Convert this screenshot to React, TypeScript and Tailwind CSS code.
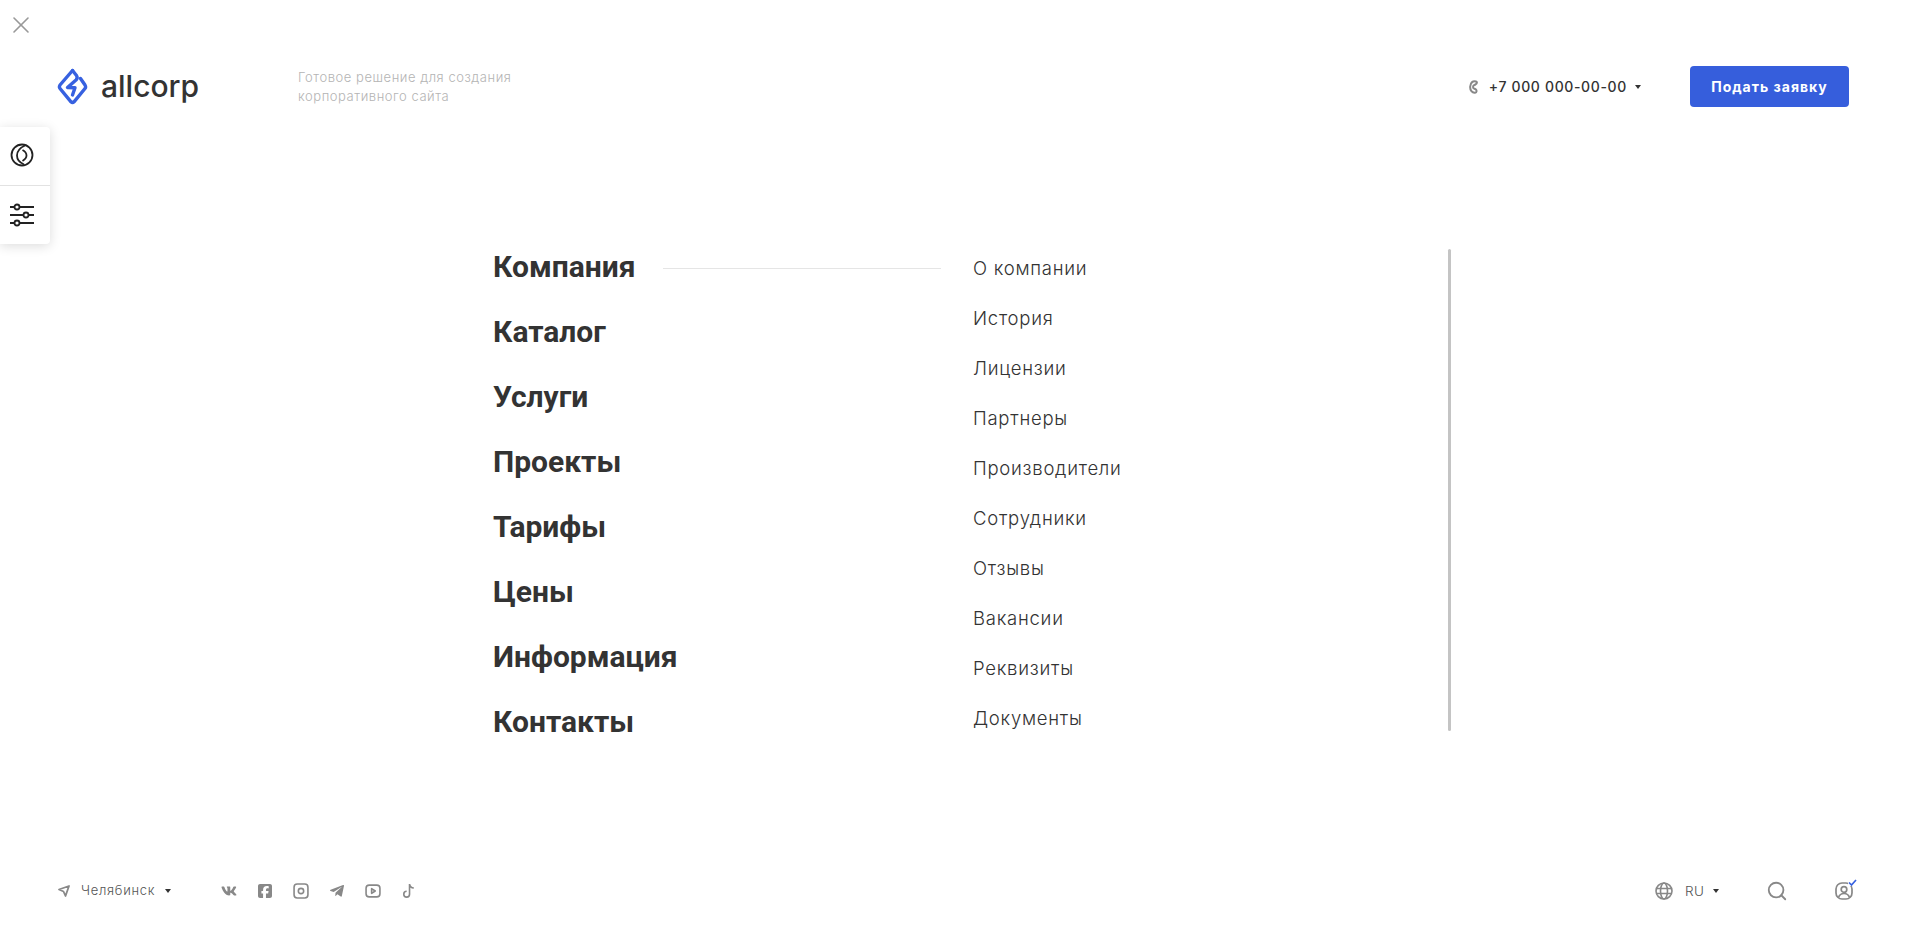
import { FaTelegramPlane, FaVk } from 'react-icons/fa';
import { FaSquareFacebook } from 'react-icons/fa6';
import { Search, X } from 'lucide-react';

const mainMenu = ['Компания', 'Каталог', 'Услуги', 'Проекты', 'Тарифы', 'Цены', 'Информация', 'Контакты'];
const subMenu = ['О компании', 'История', 'Лицензии', 'Партнеры', 'Производители', 'Сотрудники', 'Отзывы', 'Вакансии', 'Реквизиты', 'Документы'];

function Caret({ className = '' }: { className?: string }) {
	return (
		<svg width="6" height="4" viewBox="0 0 6 4" className={className}>
			<path d="M0 0h6L3 4z" fill="#333" />
		</svg>
	);
}

function Logo() {
	return (
		<svg width="32" height="38" viewBox="0 0 32 38" fill="none" stroke="#3761e0" strokeWidth="3.4" strokeLinejoin="round" strokeLinecap="round">
			<path d="M15.500 2.500 L3 17 Q1.800 19 3 20.500 L14 33.800 Q15.500 35.300 17 33.800 L28 20.500 Q29.200 19 28 17 L23.500 10.500" />
			<path d="M15.500 2.500 L19.500 7.500 Q21 10 19 12 L10.500 19.500 L18 19.800 L15.500 27" />
		</svg>
	);
}

export default function App() {
	return (
		<div className="relative flex flex-col h-[952px] bg-white overflow-hidden font-['Inter',sans-serif]">
			<button className="absolute left-[7px] top-[11px] text-[#999]">
				<X className="w-[28px] h-[28px]" strokeWidth={1.4} />
			</button>

			<div className="absolute left-0 top-[127px] w-[50px] h-[117px] flex flex-col bg-white rounded-r shadow-[0_2px_12px_rgba(0,0,0,0.14)]">
				<div className="h-[59px] flex items-center pl-[10px] pb-[3px] border-b border-[#e2e2e2]">
					<svg width="24" height="24" viewBox="0 0 24 24" fill="none" stroke="#222" strokeWidth="1.800">
						<circle cx="12" cy="12" r="10.500" />
						<path d="M15 2.500C9.500 5 7 9 7 12.500c0 4 2.500 7 7 9" />
						<path d="M12.500 7c2.800 1.500 4 3.500 4 5.500s-1.200 3.800-4 5.500" />
					</svg>
				</div>
				<div className="flex-1 flex items-center pl-[10px]">
					<svg width="24" height="24" viewBox="0 0 24 24" fill="none" stroke="#222" strokeWidth="1.800">
						<path d="M0 4h4.500M10 4h14M0 12h13M19 12h5M0 20h4.500M10 20h14" />
						<circle cx="7" cy="4" r="2.500" />
						<circle cx="16" cy="12" r="2.500" />
						<circle cx="7" cy="20" r="2.500" />
					</svg>
				</div>
			</div>

			<header className="flex items-center justify-between pt-[66px] pl-[57px] pr-[62px]">
				<div className="flex items-center">
					<Logo />
					<span className="ml-[12px] w-[109px] text-[30px] leading-[41px] font-medium tracking-[0px] text-[#333]">allcorp</span>
					<p className="ml-[88px] text-[13px] leading-[19px] font-light text-[#b4b4b4] tracking-[0.55px]">
						Готовое решение для создания
						<br />
						корпоративного сайта
					</p>
				</div>
				<div className="flex items-center">
					<svg width="9" height="14" viewBox="0 0 9 14" fill="none" stroke="#888" strokeWidth="2">
						<path d="M7 1.500C4 .5 1.500 2.500 1.200 6.500c-.3 4 2 6.500 4.800 6.200 2-.3 2-2.500.5-3.500C5.500 8.500 4 9 4 7s1.500-2 2.500-2.500C8 3.500 8.500 2 7 1.500z" />
					</svg>
					<span className="ml-[11px] text-[14px] font-medium text-[#333] tracking-[0.65px]">+7 000 000-00-00</span>
					<Caret className="ml-[8px]" />
					<button className="ml-[49px] w-[159px] h-[41px] rounded bg-[#365edc] text-white text-[14px] font-bold tracking-[1px]">Подать заявку</button>
				</div>
			</header>

			<main className="flex-1 flex pt-[127px] pl-[493px]">
				<nav className="w-[170px] flex flex-col">
					{mainMenu.map((item) => (
						<a key={item} className="h-[65px] flex items-center whitespace-nowrap font-['Roboto',sans-serif] font-bold text-[30px] text-[#333]">
							{item}
						</a>
					))}
				</nav>
				<div className="w-[278px] h-px mt-[34px] bg-[#e5e5e5]" />
				<div className="ml-[32px] w-[475px] flex flex-col pt-[10px]">
					{subMenu.map((item) => (
						<a key={item} className="h-[50px] flex items-center text-[18.500px] font-light text-[#333] tracking-[0.75px]">
							{item}
						</a>
					))}
				</div>
				<div className="w-[3px] h-[482px] mt-[15px] bg-[#c4c4c4] rounded" />
			</main>

			<footer className="h-[46px] mb-[38px] flex items-center justify-between pl-[58px] pr-[58px] text-[#888]">
				<div className="flex items-center">
					<svg width="12" height="12" viewBox="0 0 12 12" fill="none" stroke="#888" strokeWidth="1.800" strokeLinejoin="round">
						<path d="M1 4.500 11 1 7.500 11 5.500 6.500z" />
					</svg>
					<span className="ml-[11px] w-[75px] whitespace-nowrap text-[13px] font-light text-[#555] tracking-[0.7px]">Челябинск</span>
					<Caret className="ml-[9px]" />
					<div className="ml-[50px] flex items-center gap-[20px]">
						<FaVk className="w-[16px] h-[16px]" />
						<FaSquareFacebook className="w-[16px] h-[16px]" />
						<svg width="16" height="16" viewBox="0 0 15 15" fill="none" stroke="#888" strokeWidth="1.500">
							<rect x="1" y="1" width="13" height="13" rx="3" />
							<circle cx="7.500" cy="7.500" r="2.500" />
						</svg>
						<FaTelegramPlane className="w-[16px] h-[16px]" />
						<svg width="16" height="16" viewBox="0 0 15 15" fill="none" stroke="#888" strokeWidth="1.500">
							<rect x="1" y="2" width="13" height="11" rx="3" />
							<path d="M6.200 5.300v4.400l3.400-2.200z" strokeLinejoin="round" />
						</svg>
						<svg width="16" height="16" viewBox="0 0 15 15" fill="none" stroke="#888" strokeWidth="1.500">
							<path d="M8 1v9.500a2.700 2.700 0 1 1-2.700-2.700M8 1c.3 2.200 1.700 3.500 4 3.700" />
						</svg>
					</div>
				</div>
				<div className="flex items-center">
					<svg width="18" height="18" viewBox="0 0 18 18" fill="none" stroke="#888" strokeWidth="1.600">
						<circle cx="9" cy="9" r="8" />
						<ellipse cx="9" cy="9" rx="3.500" ry="8" />
						<path d="M1.500 6.500h15M1.500 11.500h15" />
					</svg>
					<span className="ml-[12px] w-[18px] text-[13.500px] font-light text-[#555] tracking-[0.5px]">RU</span>
					<Caret className="ml-[10px]" />
					<Search className="ml-[47px] w-[22px] h-[22px]" strokeWidth={2} />
					<div className="relative ml-[47px] w-[18px] h-[18px]">
						<svg width="18" height="18" viewBox="0 0 18 18" fill="none" stroke="#888" strokeWidth="1.700">
							<rect x="1" y="1" width="16" height="16" rx="6" />
							<circle cx="9" cy="7.500" r="2.800" />
							<path d="M3.500 15.500c1-3 3-4 5.500-4s4.500 1 5.500 4" />
						</svg>
						<svg width="9" height="7" viewBox="0 0 9 7" fill="none" stroke="#3761e0" strokeWidth="1.700" className="absolute -right-[4px] -top-[3px] bg-white">
							<path d="M1 3.500 3.500 6 8 1" />
						</svg>
					</div>
				</div>
			</footer>
		</div>
	);
}
